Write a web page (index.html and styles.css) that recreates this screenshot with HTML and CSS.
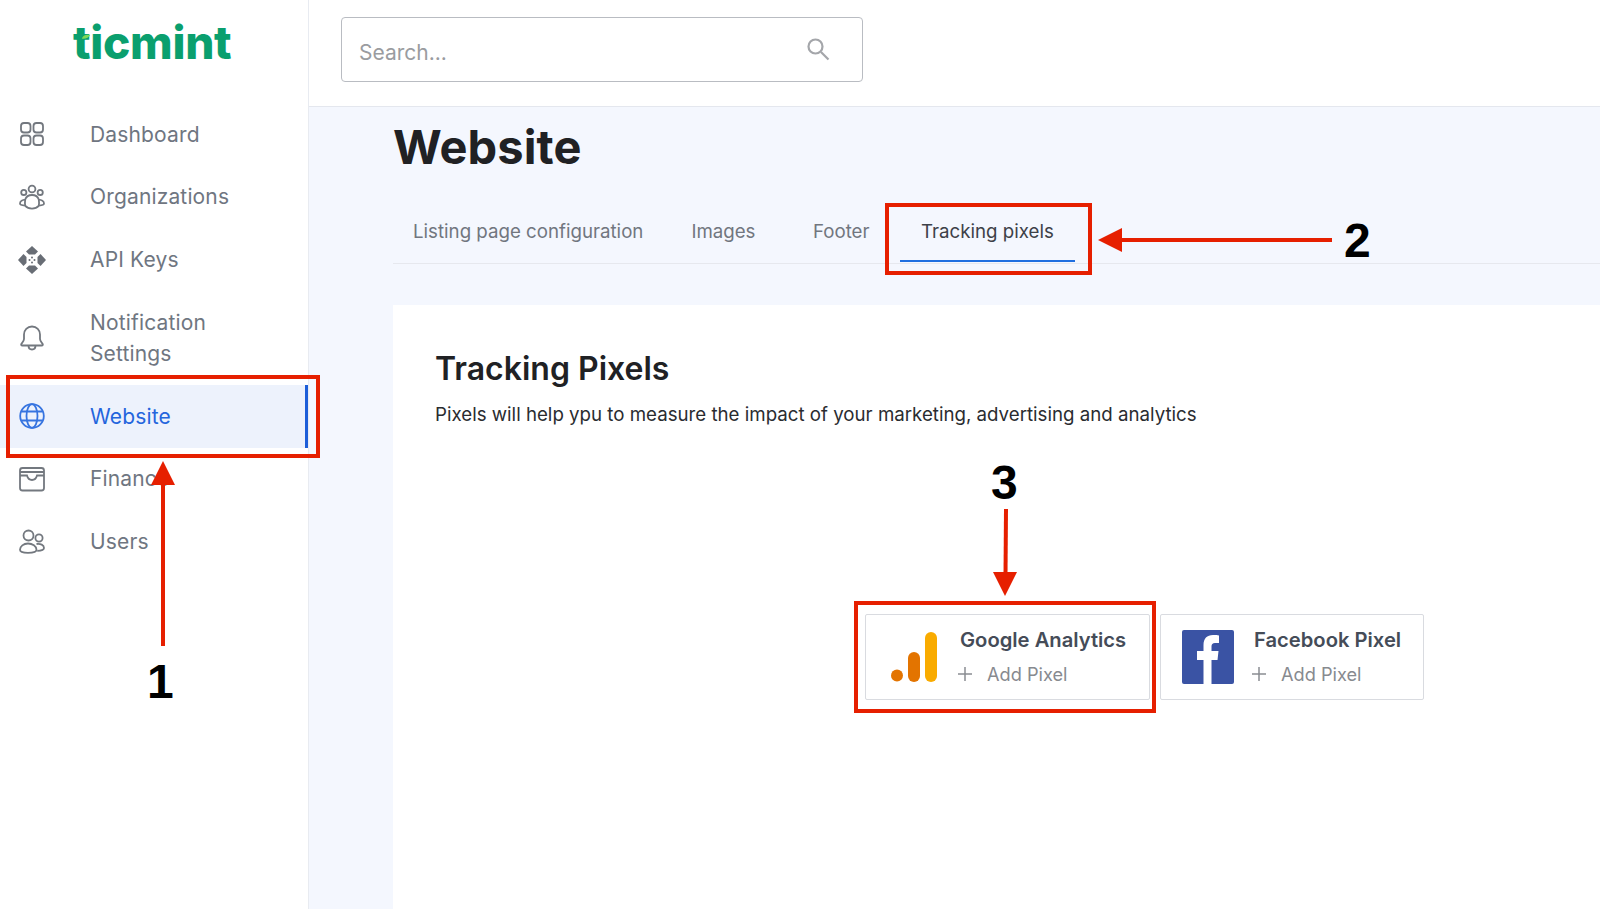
FILE: index.html
```html
<!DOCTYPE html>
<html lang="en">
<head>
<meta charset="utf-8">
<title>Website - Tracking pixels</title>
<link rel="stylesheet" href="styles.css">
</head>
<body>
<div class="app">
  <aside class="sidebar">
    <div class="logo"><span class="logo-text">ticmint</span><svg class="logo-leaf" viewBox="0 0 14 10" width="10" height="7"><path d="M1 8 C3 3 8 2 13 3 C11 7 6 9 1 8Z" fill="#7ed957"/></svg></div>
    <nav class="nav">
      <a class="nav-item">
        <svg class="nav-icon" viewBox="0 0 28 28"><rect x="3" y="3" width="9.5" height="9.5" rx="3"/><rect x="15.5" y="3" width="9.5" height="9.5" rx="3"/><rect x="3" y="15.5" width="9.5" height="9.5" rx="3"/><rect x="15.5" y="15.5" width="9.5" height="9.5" rx="3"/></svg>
        <span>Dashboard</span>
      </a>
      <a class="nav-item">
        <svg class="nav-icon" viewBox="0 0 28 28"><circle cx="14" cy="6" r="3.4"/><circle cx="5.8" cy="9.4" r="2.6"/><circle cx="22.2" cy="9.4" r="2.6"/><path d="M14 12c-3.6 0-6 2-6.8 4.6-2.6.2-5.2 1.700-5.200 4 0 1.500 1.700 1.800 5 2 1.700 1.800 4.200 3 7 3s5.300-1.200 7-3c3.300-.2 5-.5 5-2 0-2.300-2.600-3.800-5.200-4C20 14 17.600 12 14 12Z"/><path d="M7.200 16.600c-.4 2.400-.2 4.700 0 6M20.800 16.600c.4 2.400.2 4.700 0 6"/></svg>
        <span>Organizations</span>
      </a>
      <a class="nav-item">
        <svg class="nav-icon nav-icon-fill" viewBox="0 0 28 28"><path d="M14 0 20 5.500 17 8.500H11L8 5.500Z"/><path d="M14 28 20 22.500 17 19.500H11L8 22.500Z"/><path d="M0 14 5.500 8 8.500 11V17L5.500 20Z"/><path d="M28 14 22.500 8 19.500 11V17L22.500 20Z"/><circle cx="14" cy="11.500" r="1"/><circle cx="14" cy="16.500" r="1"/><circle cx="11.500" cy="14" r="1"/><circle cx="16.500" cy="14" r="1"/></svg>
        <span>API Keys</span>
      </a>
      <a class="nav-item">
        <svg class="nav-icon" viewBox="0 0 28 28"><path d="M14 2.500c-4.700 0-8 3.600-8 8v4.500c0 2-1.300 3.200-2.600 4.800-.6.800-.1 1.700.9 1.700h19.400c1 0 1.500-.9.900-1.700C23.300 18.200 22 17 22 15v-4.500c0-4.400-3.300-8-8-8Z"/><path d="M10.500 21.500c0 2.400 1.600 4 3.500 4s3.500-1.600 3.500-4"/></svg>
        <span>Notification<br>Settings</span>
      </a>
      <a class="nav-item nav-item-active">
        <svg class="nav-icon" viewBox="0 0 28 28"><circle cx="14" cy="14" r="11.800"/><ellipse cx="14" cy="14" rx="5.500" ry="11.800"/><path d="M3.500 9.500h21M3.500 18.500h21"/></svg>
        <span>Website</span>
      </a>
      <a class="nav-item">
        <svg class="nav-icon" viewBox="0 0 28 28"><rect x="2" y="3" width="24" height="22.500" rx="2.500"/><path d="M2 7h24M2 10.500h7c.8 3 2.500 4.500 5 4.500s4.200-1.500 5-4.500h7"/></svg>
        <span>Finance</span>
      </a>
      <a class="nav-item">
        <svg class="nav-icon" viewBox="0 0 28 28"><circle cx="10.500" cy="7.500" r="5"/><circle cx="21" cy="10" r="3.600"/><path d="M10 15.500c-4.500 0-8 2.800-8 6.300 0 2 2 3 8 3s8.500-1 8.500-3c0-3.500-4-6.300-8.500-6.300Z"/><path d="M18.500 16c4-.6 7.500 1 7.500 4 0 1.700-1.500 2.700-6.800 2.800"/></svg>
        <span>Users</span>
      </a>
    </nav>
  </aside>
  <main class="main">
    <header class="topbar">
      <div class="search">
        <span class="search-text">Search...</span>
        <svg class="search-icon" viewBox="0 0 24 24" width="24" height="24"><circle cx="9.500" cy="9.500" r="7"/><path d="M15 15l7.500 7.500"/></svg>
      </div>
    </header>
    <div class="content">
      <h1 class="page-title">Website</h1>
      <div class="tabs">
        <a class="tab tab-listing">Listing page configuration</a>
        <a class="tab tab-images">Images</a>
        <a class="tab tab-footer">Footer</a>
        <a class="tab tab-tracking">Tracking pixels</a>
      </div>
      <section class="panel">
        <h2 class="panel-title">Tracking Pixels</h2>
        <p class="panel-text">Pixels will help ypu to measure the impact of your marketing, advertising and analytics</p>
        <div class="pixels">
          <div class="pixel-card pixel-ga">
            <svg class="pixel-icon" viewBox="0 0 46 50" width="46" height="50"><circle cx="6" cy="43.500" r="6" fill="#e37400"/><rect x="17" y="20" width="12" height="30" rx="6" fill="#e37400"/><rect x="34" y="0" width="12" height="50" rx="6" fill="#f9ab00"/></svg>
            <div class="pixel-body">
              <div class="pixel-name">Google Analytics</div>
              <div class="pixel-add"><svg class="plus" viewBox="0 0 14 14" width="14" height="14"><path d="M7 0v14M0 7h14"/></svg><span>Add Pixel</span></div>
            </div>
          </div>
          <div class="pixel-card pixel-fb">
            <svg class="pixel-icon" viewBox="0 0 52 54" width="52" height="54"><rect width="52" height="54" rx="2" fill="#3a53a4"/><path d="M21.500 54V30H15V21h6.500v-6c0-6.500 3.500-10 9.500-10 2.500 0 4.500.2 6 .4v7.600h-4c-2.500 0-3.500 1.200-3.500 3.500V21h7l-1 9h-6v24Z" fill="#fff"/></svg>
            <div class="pixel-body">
              <div class="pixel-name">Facebook Pixel</div>
              <div class="pixel-add"><svg class="plus" viewBox="0 0 14 14" width="14" height="14"><path d="M7 0v14M0 7h14"/></svg><span>Add Pixel</span></div>
            </div>
          </div>
        </div>
      </section>
    </div>
  </main>
</div>
<svg class="marks" viewBox="0 0 1600 909" width="1600" height="909">
  <rect class="mark-box" x="8" y="377" width="310" height="79"/>
  <rect class="mark-box" x="887" y="205" width="203" height="68"/>
  <rect class="mark-box" x="856" y="603" width="298" height="108"/>
  <path class="mark-line" d="M163 646V480"/>
  <polygon class="mark-head" points="163,461 175,485 151,485"/>
  <path class="mark-line" d="M1332 240H1118"/>
  <polygon class="mark-head" points="1098,240 1122,228 1122,252"/>
  <path class="mark-line" d="M1006 509 1005.500 575"/>
  <polygon class="mark-head" points="1005,596 993,572 1017,572"/>
</svg>
<span class="mark-num mark-num-1">1</span>
<span class="mark-num mark-num-2">2</span>
<span class="mark-num mark-num-3">3</span>
</body>
</html>
```
FILE: styles.css
```css
* { box-sizing: border-box; }
html, body { margin: 0; height: 100%; overflow: hidden; }
body { font-family: Inter, "Liberation Sans", sans-serif; background: #fff; color: #222; }
.app { display: flex; height: 909px; }

.sidebar { width: 309px; flex: none; background: #fff; border-right: 1px solid #e8ebf1; }
.logo { height: 103px; padding: 10px 0 0 73px; position: relative; }
.logo-text { font-weight: 800; font-size: 46px; line-height: 64px; letter-spacing: -.3px; color: #0a9f6e; }
.logo-leaf { position: absolute; left: 81px; top: 33px; }
.nav { display: flex; flex-direction: column; }
.nav-item { display: flex; align-items: center; gap: 44px; padding: 15.7px 0 15.7px 18px; font-size: 21px; letter-spacing: .15px; line-height: 31.3px; color: #6f7681; }
.nav-icon { width: 28px; height: 28px; flex: none; fill: none; stroke: #73787f; stroke-width: 1.8; }
.nav-icon-fill { fill: #686d75; stroke: none; }
.nav-item-active { background: #edf2fc; color: #2465dd; border-right: 3px solid #1d5ed8; }
.nav-item-active .nav-icon { stroke: #3674e0; }

.main { flex: 1; min-width: 0; display: flex; flex-direction: column; }
.topbar { height: 107px; flex: none; padding: 17px 0 0 32px; background: #fff; border-bottom: 1px solid #e4e7ee; }
.search { width: 522px; height: 65px; border: 1px solid #b9bcc2; border-radius: 4px; display: flex; align-items: center; justify-content: space-between; padding: 0 32px 0 17px; }
.search-text { font-size: 21px; color: #9a9ca0; padding-top: 6px; }
.search-icon { fill: none; stroke: #a4a6aa; stroke-width: 2.2; margin-top: -2px; }

.content { flex: 1; min-height: 0; background: #f4f7fe; padding-left: 84px; display: flex; flex-direction: column; }
.page-title { margin: 9px 0 0; font-size: 47px; letter-spacing: .1px; line-height: 62px; font-weight: 700; color: #202124; }
.tabs { display: flex; margin-top: 23px; height: 63px; border-bottom: 1px solid #e6e8ee; }
.tab { display: block; font-size: 18.7px; line-height: 22px; padding: 20px 0 0; color: #71767f; }
.tab-listing { margin-left: 20px; }
.tab-images { margin-left: 48px; }
.tab-footer { margin-left: 57.5px; }
.tab-tracking { margin-left: 30.5px; padding: 20px 21px 0; height: 61px; color: #3d4148; border-bottom: 2px solid #1f6fe0; }

.panel { flex: 1; margin-top: 41px; background: #fff; padding: 42px 0 0 42px; }
.panel-title { margin: 0; font-size: 32px; line-height: 44px; font-weight: 600; color: #202124; }
.panel-text { margin: 8px 0 0; font-size: 18.7px; line-height: 32px; color: #2a2c30; }
.pixels { display: flex; gap: 10px; margin: 183px 0 0 430px; }
.pixel-card { height: 86px; background: #fff; border: 1px solid #d9dbe0; border-radius: 2px; display: flex; align-items: center; }
.pixel-ga { width: 285px; padding-left: 25px; gap: 23px; }
.pixel-fb { width: 264px; padding-left: 21px; gap: 20px; }
.pixel-icon { flex: none; }
.pixel-name { font-size: 20.2px; line-height: 28px; font-weight: 600; color: #454c58; white-space: nowrap; }
.pixel-add { display: flex; align-items: center; gap: 15px; margin-top: 6px; font-size: 18.2px; line-height: 28px; color: #878a8f; }
.plus { fill: none; stroke: #8a8d92; stroke-width: 1.5; flex: none; margin-left: -2px; }

.marks { position: absolute; left: 0; top: 0; pointer-events: none; }
.mark-box { fill: none; stroke: #e61f00; stroke-width: 4; }
.mark-line { fill: none; stroke: #e61f00; stroke-width: 4; }
.mark-head { fill: #e61f00; }
.mark-num { position: absolute; font-family: "Liberation Sans", Arial, sans-serif; font-weight: 700; font-size: 48px; line-height: 56px; color: #000; }
.mark-num-1 { left: 147px; top: 654px; }
.mark-num-2 { left: 1344px; top: 213px; }
.mark-num-3 { left: 991px; top: 455px; }
```
